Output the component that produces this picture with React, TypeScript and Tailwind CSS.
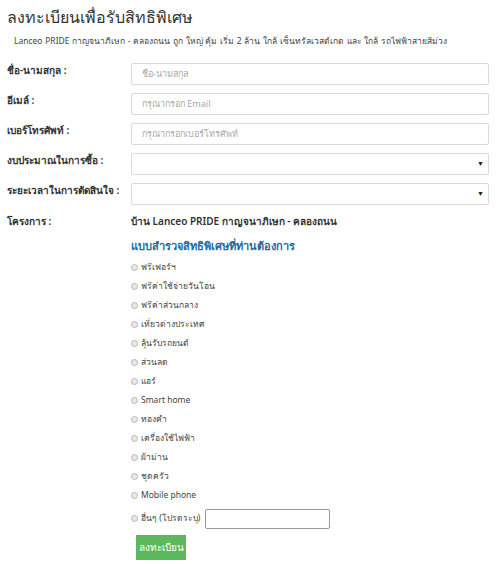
const fields = [
  { label: 'ชื่อ-นามสกุล :', placeholder: 'ชื่อ-นามสกุล', type: 'input' },
  { label: 'อีเมล์ :', placeholder: 'กรุณากรอก Email', type: 'input' },
  { label: 'เบอร์โทรศัพท์ :', placeholder: 'กรุณากรอกเบอร์โทรศัพท์', type: 'input' },
  { label: 'งบประมาณในการซื้อ :', placeholder: '', type: 'select' },
  { label: 'ระยะเวลาในการตัดสินใจ :', placeholder: '', type: 'select' },
];

const options = [
  'ฟรีเฟอร์ฯ',
  'ฟรีค่าใช้จ่ายวันโอน',
  'ฟรีค่าส่วนกลาง',
  'เที่ยวต่างประเทศ',
  'ลุ้นรับรถยนต์',
  'ส่วนลด',
  'แอร์',
  'Smart home',
  'ทองคำ',
  'เครื่องใช้ไฟฟ้า',
  'ผ้าม่าน',
  'ชุดครัว',
  'Mobile phone',
];

function Radio() {
  return <span className="inline-block w-[7px] h-[7px] rounded-full border border-[#b8b8b8] bg-[#e8e8e8] shrink-0" />;
}

export default function App() {
  return (
    <div className="w-[500px] h-[564px] bg-white text-[#333] overflow-hidden" style={{ fontFamily: 'Tahoma, "Noto Sans", sans-serif' }}>
      <div className="pl-[7px] pr-[11px]">
        <h1 className="text-[16px] leading-[20px] pt-[7px] text-[#333]">ลงทะเบียนเพื่อรับสิทธิพิเศษ</h1>
        <p className="text-[8.5px] leading-[12px] mt-[8px] pl-[7px] [word-spacing:0.5px] text-[#444]">
          Lanceo PRIDE กาญจนาภิเษก - คลองถนน ถูก ใหญ่ คุ้ม เริ่ม 2 ล้าน ใกล้ เซ็นทรัลเวสต์เกต และ ใกล้ รถไฟฟ้าสายสีม่วง
        </p>

        {/* ฟอร์ม */}
        <div className="mt-[16px] flex flex-col gap-[8px]">
          {fields.map(f => (
            <div key={f.label} className="flex items-center">
              <label className="w-[124px] shrink-0 text-[10px] font-semibold text-[#333] self-start">{f.label}</label>
              <div className="flex-1 h-[22px] border border-[#d9d9d9] rounded-[2px] flex items-center px-[10px] justify-between">
                <span className="text-[9px] text-[#aaa]">{f.placeholder}</span>
                {f.type === 'select' && <span className="text-[7px] text-[#222] -mr-[6px]">▼</span>}
              </div>
            </div>
          ))}
        </div>

        <div className="flex mt-[9px]">
          <div className="w-[124px] shrink-0 text-[10px] font-semibold text-[#333]">โครงการ :</div>
          <div className="text-[10px] font-semibold text-[#333]">บ้าน Lanceo PRIDE กาญจนาภิเษก - คลองถนน</div>
        </div>

        <div className="pl-[124px] mt-[9px]">
          <div className="text-[11px] font-bold text-[#236a9e]">แบบสำรวจสิทธิพิเศษที่ท่านต้องการ</div>
          <div className="mt-[6px] flex flex-col gap-[5px]">
            {options.map(o => (
              <div key={o} className="flex items-center gap-[3px] h-[14px]">
                <Radio />
                <span className="text-[8.5px] text-[#444]">{o}</span>
              </div>
            ))}
            <div className="flex items-center gap-[3px] mt-[1px]">
              <Radio />
              <span className="text-[8.5px] text-[#444]">อื่นๆ (โปรดระบุ)</span>
              <div className="ml-[2px] w-[125px] h-[20px] border border-[#999] rounded-[2px]" />
            </div>
          </div>
          <button className="mt-[6px] ml-[5px] w-[50px] h-[25px] bg-[#5cb85c] text-white text-[10px]">ลงทะเบียน</button>
        </div>
      </div>
    </div>
  );
}
